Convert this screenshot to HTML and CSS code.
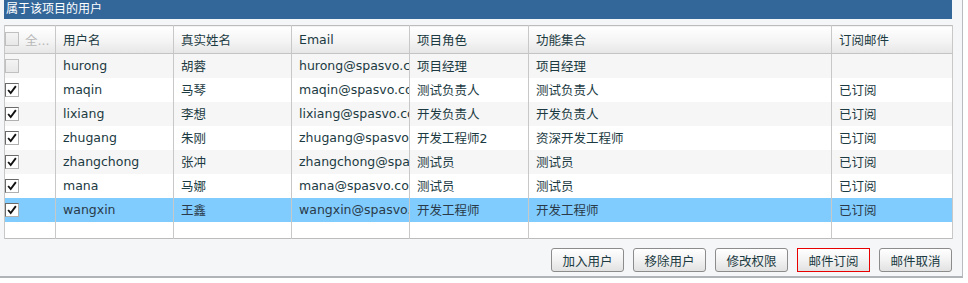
FILE: index.html
```html
<!DOCTYPE html>
<html lang="zh">
<head>
<meta charset="utf-8">
<link rel="stylesheet" href="styles.css">
</head>
<body>
<div class="frame">
  <div class="panel">
    <div class="title">属于该项目的用户</div>
    <table class="grid">
      <colgroup>
        <col style="width:51px"><col style="width:118px"><col style="width:118px"><col style="width:118px"><col style="width:119px"><col style="width:303px"><col style="width:121px">
      </colgroup>
      <thead>
        <tr>
          <th class="chk"><span class="cb off"></span><span class="all">全...</span></th>
          <th>用户名</th><th>真实姓名</th><th>Email</th><th>项目角色</th><th>功能集合</th><th>订阅邮件</th>
        </tr>
      </thead>
      <tbody>
        <tr class="alt"><td class="chk"><span class="cb off"></span></td><td>hurong</td><td>胡蓉</td><td>hurong@spasvo.com</td><td>项目经理</td><td>项目经理</td><td></td></tr>
        <tr><td class="chk"><span class="cb on"><svg viewBox="0 0 14 14"><path d="M2.5 7 L5.5 10.5 L11.5 2.5" fill="none" stroke="#111" stroke-width="2.2"/></svg></span></td><td>maqin</td><td>马琴</td><td>maqin@spasvo.com</td><td>测试负责人</td><td>测试负责人</td><td>已订阅</td></tr>
        <tr class="alt"><td class="chk"><span class="cb on"><svg viewBox="0 0 14 14"><path d="M2.5 7 L5.5 10.5 L11.5 2.5" fill="none" stroke="#111" stroke-width="2.2"/></svg></span></td><td>lixiang</td><td>李想</td><td>lixiang@spasvo.com</td><td>开发负责人</td><td>开发负责人</td><td>已订阅</td></tr>
        <tr><td class="chk"><span class="cb on"><svg viewBox="0 0 14 14"><path d="M2.5 7 L5.5 10.5 L11.5 2.5" fill="none" stroke="#111" stroke-width="2.2"/></svg></span></td><td>zhugang</td><td>朱刚</td><td>zhugang@spasvo.com</td><td>开发工程师2</td><td>资深开发工程师</td><td>已订阅</td></tr>
        <tr class="alt"><td class="chk"><span class="cb on"><svg viewBox="0 0 14 14"><path d="M2.5 7 L5.5 10.5 L11.5 2.5" fill="none" stroke="#111" stroke-width="2.2"/></svg></span></td><td>zhangchong</td><td>张冲</td><td>zhangchong@spasvo.com</td><td>测试员</td><td>测试员</td><td>已订阅</td></tr>
        <tr><td class="chk"><span class="cb on"><svg viewBox="0 0 14 14"><path d="M2.5 7 L5.5 10.5 L11.5 2.5" fill="none" stroke="#111" stroke-width="2.2"/></svg></span></td><td>mana</td><td>马娜</td><td>mana@spasvo.com</td><td>测试员</td><td>测试员</td><td>已订阅</td></tr>
        <tr class="sel"><td class="chk"><span class="cb on"><svg viewBox="0 0 14 14"><path d="M2.5 7 L5.5 10.5 L11.5 2.5" fill="none" stroke="#111" stroke-width="2.2"/></svg></span></td><td>wangxin</td><td>王鑫</td><td>wangxin@spasvo.com</td><td>开发工程师</td><td>开发工程师</td><td>已订阅</td></tr>
        <tr class="empty"><td></td><td></td><td></td><td></td><td></td><td></td><td></td></tr>
      </tbody>
    </table>
    <div class="actions">
      <button class="btn">加入用户</button>
      <button class="btn">移除用户</button>
      <button class="btn">修改权限</button>
      <button class="btn focus">邮件订阅</button>
      <button class="btn">邮件取消</button>
    </div>
  </div>
</div>
</body>
</html>
```
FILE: styles.css
```css
* { box-sizing: border-box; }
html, body { margin: 0; padding: 0; background: #ffffff; }
body {
  font-family: "DejaVu Sans", "Noto Sans CJK SC", sans-serif;
  font-size: 12.5px;
  color: #1b3a42;
}
.frame {
  width: 963px;
  height: 278px;
  background: #f5f6f8;
  border-right: 1px solid #b8bcc0;
  border-bottom: 2px solid #b0b4b8;
  padding: 0 10px 0 4px;
}
.panel { width: 948px; }
.title {
  height: 19px;
  background: #336699;
  color: #ffffff;
  font-family: "Noto Sans CJK SC", sans-serif;
  font-size: 12px;
  line-height: 15px;
  padding-left: 2px;
}
.grid {
  margin-top: 6px;
  width: 948px;
  table-layout: fixed;
  border-collapse: collapse;
  border: 1px solid #bcbcbc;
}
.grid th, .grid td {
  border-left: 1px solid #c8c8c8;
  border-right: 1px solid #c8c8c8;
  padding: 0 0 0 7px;
  white-space: nowrap;
  overflow: hidden;
  text-align: left;
  font-weight: normal;
}
.grid th {
  height: 28px;
  background: linear-gradient(#ffffff, #f4f4f4 55%, #e6e6e6);
  border-bottom: 1px solid #c4c4c4;
  color: #1b3a42;
}
.grid td { height: 24px; background: #ffffff; }
.grid tr.alt td { background: #f6f6f6; }
.grid tr.sel td { background: #80ccff; color: #2a3a48; }
.grid tr.empty td { height: 17px; }
.grid .chk { padding-left: 0; }
.cb {
  display: inline-block;
  width: 14px;
  height: 14px;
  vertical-align: middle;
  margin-top: -2px;
}
.cb.off {
  border: 1px solid #c0c0c0;
  background: linear-gradient(#f4f4f4, #e8e8e8);
}
.cb.on {
  border: 1px solid #6a6a6a;
  border-right-color: #b0b0b0;
  border-bottom-color: #b0b0b0;
  background: #ffffff;
}
.cb svg { display: block; width: 12px; height: 12px; }
.all {
  color: #b8b8b8;
  margin-left: 6px;
  vertical-align: middle;
}
.actions {
  display: flex;
  justify-content: flex-end;
  gap: 9px;
  margin-top: 9px;
}
.btn {
  width: 73px;
  height: 24px;
  border: 1px solid #8c8c8c;
  border-radius: 3px;
  background: linear-gradient(#ffffff, #f2f2f2 50%, #e2e2e2);
  font-family: "Noto Sans CJK SC", sans-serif;
  font-size: 12.5px;
  color: #1b3a42;
  padding: 0;
}
.btn.focus {
  border: 1px solid #e80000;
  border-radius: 0;
}
```
